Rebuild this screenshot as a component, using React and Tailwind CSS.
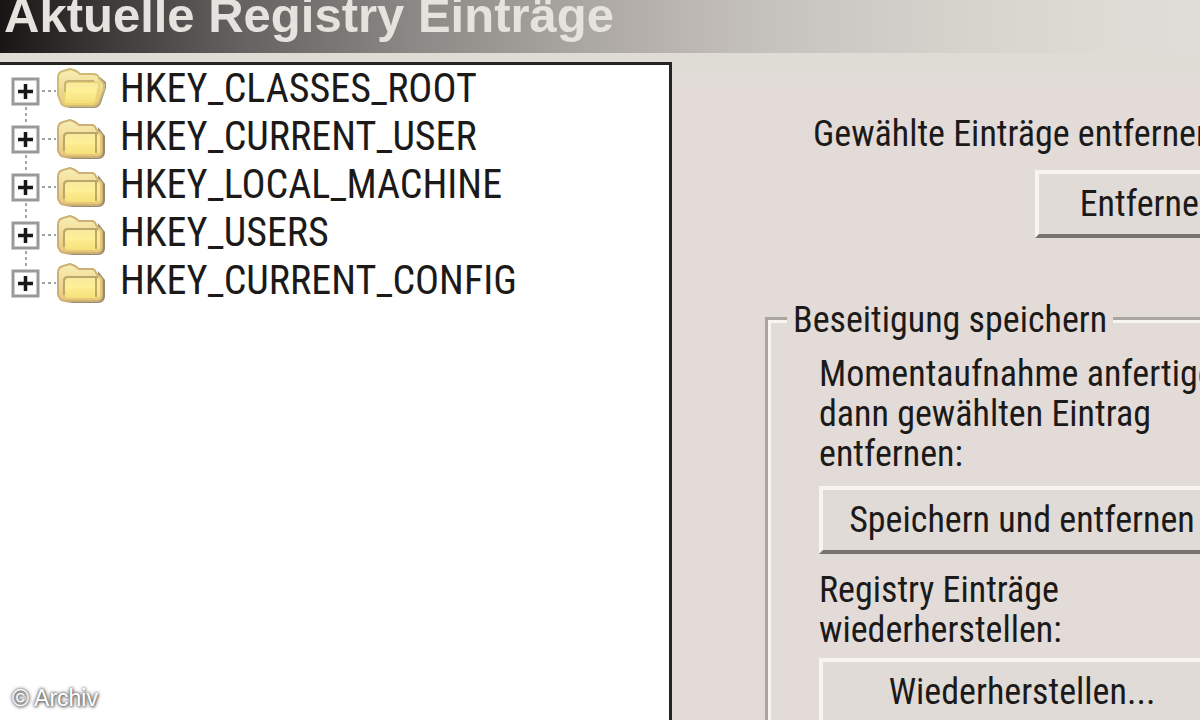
import React from "react";

const KEYS = [
  "HKEY_CLASSES_ROOT",
  "HKEY_CURRENT_USER",
  "HKEY_LOCAL_MACHINE",
  "HKEY_USERS",
  "HKEY_CURRENT_CONFIG",
];

function Expander({ first, last }) {
  return (
    <svg width="56" height="48" viewBox="0 0 56 48" aria-hidden="true">
      <g stroke="#a3a3a3" strokeWidth="2" strokeDasharray="3 3" fill="none">
        {!first && <path d="M26 0V12" />}
        {!last && <path d="M26 42V48" />}
        <path d="M42 26H56" />
      </g>
      <rect x="13" y="14" width="25" height="25" fill="#fdfdfd" stroke="#999" strokeWidth="3" />
      <path d="M18 26.500H33M25.500 19V34" stroke="#161616" strokeWidth="3.500" />
    </svg>
  );
}

function Folder({ open }) {
  return (
    <svg width="52" height="48" viewBox="0 0 52 48" aria-hidden="true">
      <defs>
        <linearGradient id="front" x1="0" y1="0" x2="0" y2="1">
          <stop offset="0" stopColor="#f7e9a0" />
          <stop offset="0.400" stopColor="#fdf096" />
          <stop offset="1" stopColor="#f5de78" />
        </linearGradient>
        <linearGradient id="back" x1="0" y1="0" x2="0" y2="1">
          <stop offset="0" stopColor="#f8efb4" />
          <stop offset="1" stopColor="#e8c67c" />
        </linearGradient>
      </defs>
      {open ? (
        <g strokeLinejoin="round">
          <path d="M8 43H38Q43 43 45 38L50 23V17L44 12L42 38Z" fill="#857b5c" opacity="0.800" />
          <path d="M5 38L2 30V13Q2 7 7 6L14 4Q20 5 24 9H37Q42 9 43 13L48 19V24L43 37Q41 41 37 41H10Q6 41 5 38Z" fill="url(#back)" stroke="#cfbb72" strokeWidth="2" />
          <path d="M13 17H39Q44 17 43 21L40 36Q39 39 36 39H11Q8 39 8 36L9 21Q9 17 13 17Z" fill="url(#front)" stroke="#ecd474" strokeWidth="2" />
          <path d="M9 27V20Q9 16 13 16H38" stroke="#c6b472" strokeWidth="2" fill="none" />
        </g>
      ) : (
        <g strokeLinejoin="round">
          <path d="M9 46H41Q48 46 49 40V23L42 14V42Z" fill="#857558" opacity="0.850" />
          <path d="M2 37V16Q2 10 7 9L14 7Q19 8 23 12H36Q39 12 40 16L46 22V39Q46 43 41 44H9Q3 43 2 37Z" fill="url(#back)" stroke="#cfb074" strokeWidth="2" />
          <path d="M12 20H41Q45 20 45 24V38Q45 42 41 42H12Q8 42 8 38V24Q8 20 12 20Z" fill="url(#front)" stroke="#e6c878" strokeWidth="2" />
          <path d="M8 38V24Q8 20 12 20H42M40 21V40" stroke="#bda768" strokeWidth="2" fill="none" />
        </g>
      )}
    </svg>
  );
}

function BevelButton({ children, className }) {
  return (
    <button
      type="button"
      className={`h-[68px] border-4 border-t-[#f8f5f1] border-l-[#f8f5f1] border-r-[#77736f] border-b-[#77736f] bg-[#e0dbd7] text-center whitespace-nowrap ${className}`}
    >
      {children}
    </button>
  );
}

export default function App() {
  return (
    <div className="flex h-screen flex-col overflow-hidden bg-[#e2dbd7] font-['Roboto_Condensed',Roboto,'Liberation_Sans',sans-serif] text-[36px] leading-10 text-[#1c1a19]">
      <header className="h-[53px] shrink-0 bg-[linear-gradient(90deg,#171615_0%,#3c3b39_9%,#646260_20%,#8a8784_34%,#a9a5a1_48%,#bdb8b3_58%,#cac7c2_68%,#d6d3cd_80%,#dedbd5_92%,#e0dcd7_100%)]">
        <h1 className="pl-1 font-['Liberation_Sans',Arial,sans-serif] text-[49px] leading-[30px] font-bold whitespace-nowrap text-[#e6e2de]">
          Aktuelle Registry Einträge
        </h1>
      </header>

      <main className="grid min-h-0 flex-1 grid-cols-[56fr_44fr] bg-[linear-gradient(180deg,#dfdcd6_0px,#dfdcd6_20px,transparent_32px)] pt-[9px]">
        <section
          aria-label="Registry"
          className="relative min-w-0 border-t-3 border-r-3 border-[#242424] bg-white"
        >
          <ul className="text-[40px]">
            {KEYS.map((key, i) => (
              <li key={key} className="flex h-12 items-center">
                <button type="button" aria-label={`${key} öffnen`}>
                  <Expander first={i === 0} last={i === KEYS.length - 1} />
                </button>
                <Folder open={i === 0} />
                <span className="pl-3">{key}</span>
              </li>
            ))}
          </ul>
          <p className="absolute bottom-2 left-3 font-['Liberation_Sans',Arial,sans-serif] text-[23px] leading-7 text-white [text-shadow:0_0_3px_#555,0_0_4px_#888,1px_1px_3px_#777]">
            © Archiv
          </p>
        </section>

        <section className="min-w-0 overflow-hidden pt-[52px] pl-[93px]">
          <div className="flex w-[500px] flex-col">
            <p className="pl-12 whitespace-nowrap">Gewählte Einträge entfernen:</p>
            <BevelButton className="mt-4 ml-[270px] w-[226px]">Entfernen</BevelButton>
            <fieldset className="mt-[58px] border-3 border-[#aaa4a3] pb-8 pl-[51px] shadow-[inset_3px_3px_0_#f8f5f1]">
              <legend className="-ml-8 bg-[#e2dbd7] px-[6px] pt-1">Beseitigung speichern</legend>
              <p className="pt-[14px] whitespace-nowrap">
                Momentaufnahme anfertigen,
                <br />
                dann gewählten Eintrag
                <br />
                entfernen:
              </p>
              <BevelButton className="mt-3 w-[406px]">Speichern und entfernen</BevelButton>
              <p className="mt-4">
                Registry Einträge
                <br />
                wiederherstellen:
              </p>
              <BevelButton className="mt-2 w-[406px]">Wiederherstellen...</BevelButton>
            </fieldset>
          </div>
        </section>
      </main>
    </div>
  );
}
